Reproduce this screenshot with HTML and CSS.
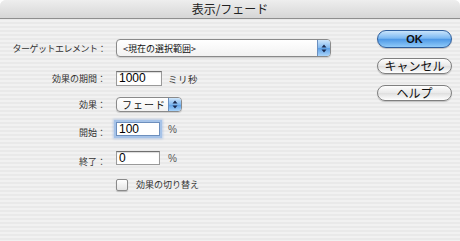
FILE: index.html
```html
<!DOCTYPE html>
<html lang="ja">
<head>
<meta charset="utf-8">
<link rel="stylesheet" href="styles.css">
</head>
<body>
<div class="window">
  <div class="titlebar">表示/フェード</div>
  <div class="content">
    <div class="form">
      <div class="row r1">
        <div class="label">ターゲットエレメント：</div>
        <div class="popup wide"><span class="ptext">&lt;現在の選択範囲&gt;</span><span class="arrows"><svg width="6" height="9" viewBox="0 0 6 9"><path d="M3 0.5 L5.5 3.5 L0.5 3.5 Z M3 8.5 L5.5 5.5 L0.5 5.5 Z" fill="#1a2a50"/></svg></span></div>
      </div>
      <div class="row r2">
        <div class="label">効果の期間：</div>
        <div class="field w46">1000</div>
        <div class="suffix">ミリ秒</div>
      </div>
      <div class="row r3">
        <div class="label">効果：</div>
        <div class="popup small"><span class="ptext">フェード</span><span class="arrows"><svg width="6" height="9" viewBox="0 0 6 9"><path d="M3 0.5 L5.5 3.5 L0.5 3.5 Z M3 8.5 L5.5 5.5 L0.5 5.5 Z" fill="#1a2a50"/></svg></span></div>
      </div>
      <div class="row r4 low">
        <div class="label">開始：</div>
        <div class="field w44 focus">100</div>
        <div class="suffix pct">%</div>
      </div>
      <div class="row r5 low">
        <div class="label">終了：</div>
        <div class="field w44">0</div>
        <div class="suffix pct">%</div>
      </div>
      <div class="row r6">
        <div class="label"></div>
        <div class="check"></div>
        <div class="checklabel">効果の切り替え</div>
      </div>
    </div>
    <div class="buttons">
      <div class="btn default">OK</div>
      <div class="btn b2">キャンセル</div>
      <div class="btn b3">ヘルプ</div>
    </div>
  </div>
</div>
</body>
</html>
```
FILE: styles.css
```css
* { box-sizing: border-box; }
html, body { margin: 0; padding: 0; background: #ffffff; }
body {
  width: 460px;
  height: 241px;
  overflow: hidden;
  font-family: "Liberation Sans", "Noto Sans CJK JP", sans-serif;
  color: #222;
}
.window {
  width: 460px;
  height: 241px;
  display: flex;
  flex-direction: column;
  background: repeating-linear-gradient(to bottom, #f1f1f1 0px, #f1f1f1 2px, #e9e9e9 2px, #e9e9e9 4px);
  border-radius: 6px 6px 0 0;
  overflow: hidden;
}
.titlebar {
  height: 19px;
  flex: none;
  background: linear-gradient(#eeeeee, #d6d6d6);
  border-bottom: 1px solid #8e8e8e;
  text-align: center;
  font-size: 12px;
  line-height: 18px;
  color: #222;
  font-family: "Noto Sans CJK JP", sans-serif;
}
.content {
  flex: 1;
  display: flex;
  justify-content: space-between;
  padding: 0 8px 0 0;
}
.form {
  display: flex;
  flex-direction: column;
  padding-top: 20px;
}
.row {
  display: flex;
  align-items: center;
  gap: 10px;
}
.row.low .label { align-self: flex-end; margin-bottom: -3px; }
.r2 { margin-top: 14px; }
.r3 { margin-top: 11px; }
.r4 { margin-top: 10px; }
.r5 { margin-top: 15px; }
.r6 { margin-top: 13px; gap: 0; }
.label {
  width: 106px;
  text-align: right;
  font-size: 9px;
  color: #333;
  font-family: "Noto Sans CJK JP", sans-serif;
  white-space: nowrap;
}
.r1 .label { letter-spacing: -0.5px; }
.popup {
  display: flex;
  align-items: center;
  background: linear-gradient(#ffffff, #f2f2f2);
  border: 1px solid #8a8a8a;
  border-radius: 4px;
  overflow: hidden;
  box-shadow: 0 1px 1px rgba(0,0,0,0.15);
}
.popup.wide { width: 215px; height: 18px; }
.popup.small { width: 66px; height: 15px; }
.ptext {
  flex: 1;
  padding-left: 6px;
  font-size: 9px;
  font-family: "Noto Sans CJK JP", sans-serif;
  color: #111;
  line-height: 1;
}
.popup.small .ptext { padding-left: 5px; font-size: 10px; letter-spacing: 1px; }
.arrows {
  width: 13px;
  height: 100%;
  display: flex;
  align-items: center;
  justify-content: center;
  background: linear-gradient(#cfe6fb, #7fb7ef 50%, #5c9fe6 51%, #a9d4fa);
  border-left: 1px solid #6b8fbf;
}
.field {
  height: 15px;
  background: #ffffff;
  border: 1px solid #9a9a9a;
  border-top-color: #6f6f6f;
  box-shadow: inset 0 1px 1px rgba(0,0,0,0.15);
  font-size: 12px;
  line-height: 13px;
  padding-left: 2px;
  color: #000;
}
.w46 { width: 46px; }
.w44 { width: 44px; height: 14px; }
.field.focus {
  box-shadow: 0 0 0 2px #a6c3e8, 0 0 2px 3px rgba(120,160,220,0.4);
  border-color: #6d8fbd;
}
.suffix {
  font-size: 9.5px;
  color: #333;
  font-family: "Noto Sans CJK JP", sans-serif;
  margin-left: -4px;
  letter-spacing: 0.5px;
}
.suffix.pct { font-family: "Liberation Sans", sans-serif; font-size: 10px; color: #555; margin-left: -2px; letter-spacing: 0; }
.check {
  width: 12px;
  height: 12px;
  margin-left: 10px;
  border: 1px solid #8a8a8a;
  border-radius: 2px;
  background: linear-gradient(#ffffff, #e4e4e4);
  box-shadow: 0 1px 1px rgba(0,0,0,0.2);
}
.checklabel {
  margin-left: 8px;
  font-size: 9px;
  color: #333;
  font-family: "Noto Sans CJK JP", sans-serif;
}
.buttons {
  display: flex;
  flex-direction: column;
  padding-top: 11px;
  width: 75px;
}
.btn {
  width: 75px;
  height: 16px;
  border-radius: 8px;
  border: 1px solid #7f7f7f;
  background: linear-gradient(#fdfdfd, #e9e9e9 50%, #dedede 51%, #ffffff);
  box-shadow: 0 1px 1px rgba(0,0,0,0.2);
  text-align: center;
  font-size: 12px;
  line-height: 14px;
  font-family: "Noto Sans CJK JP", sans-serif;
  color: #111;
}
.btn.default {
  height: 18px;
  border-radius: 9px;
  border-color: #2f5e9c;
  background: linear-gradient(#c8e4fc, #7db9f2 45%, #4f99e6 52%, #8fcaf9);
  line-height: 16px;
  font-family: "Liberation Sans", sans-serif;
  font-weight: bold;
  font-size: 11px;
}
.b2 { margin-top: 10px; }
.b3 { margin-top: 11px; }
```
